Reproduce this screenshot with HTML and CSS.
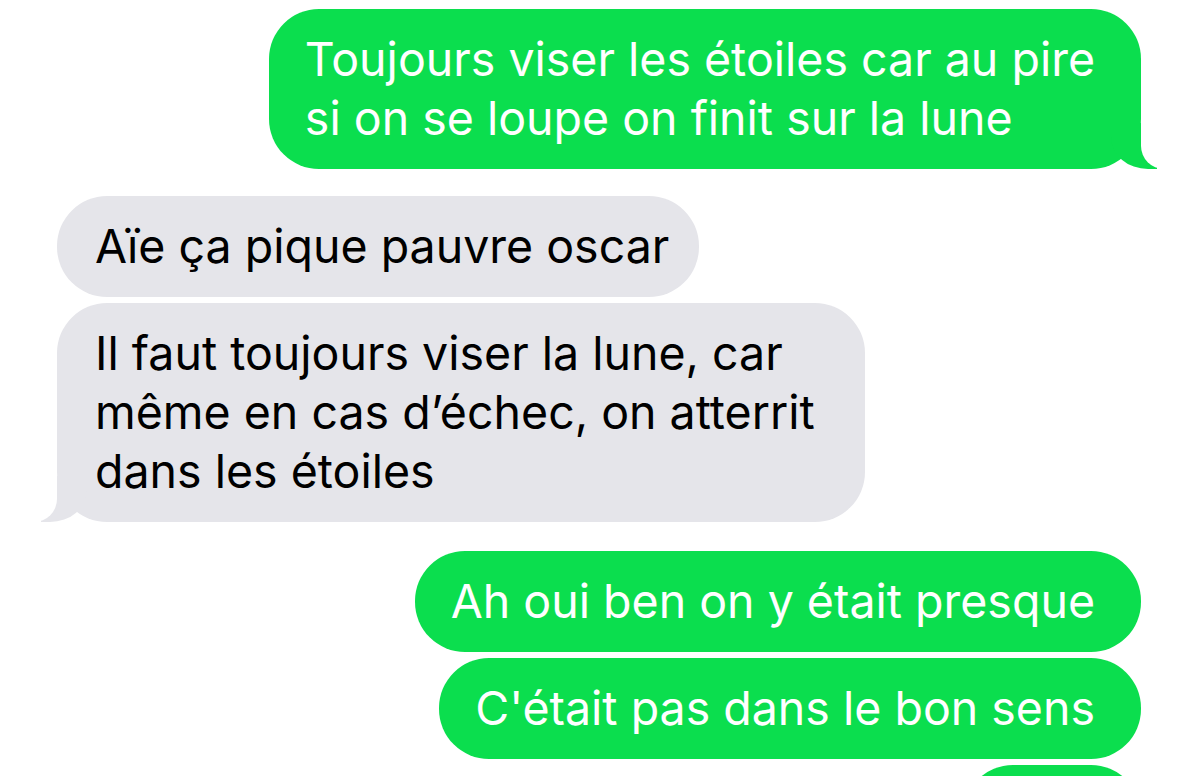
FILE: index.html
```html
<!DOCTYPE html>
<html lang="fr">
<head>
<meta charset="utf-8">
<title>Messages</title>
<link rel="stylesheet" href="styles.css">
</head>
<body>
<main class="thread">
  <div class="msg sent tail">Toujours viser les étoiles car au pire<br>si on se loupe on finit sur la lune</div>
  <div class="msg received gap-lg">Aïe ça pique pauvre oscar</div>
  <div class="msg received wrapped tail gap-sm">Il faut toujours viser la lune, car<br>même en cas d’échec, on atterrit<br>dans les étoiles</div>
  <div class="msg sent gap-xl">Ah oui ben on y était presque</div>
  <div class="msg sent gap-sm">C'était pas dans le bon sens</div>
  <div class="msg sent stub gap-sm"></div>
</main>
</body>
</html>
```

FILE: styles.css
```css
html, body {
  margin: 0;
  padding: 0;
  background: #ffffff;
}

body {
  width: 1200px;
  height: 776px;
  overflow: hidden;
  font-family: "Inter", "Roboto", "Liberation Sans", sans-serif;
}

.thread {
  display: flex;
  flex-direction: column;
  padding: 9px 59px 0 57px;
}

.msg {
  position: relative;
  font-size: 46.5px;
  line-height: 59px;
  border-radius: 50px;
  padding: 21px 36px;
  white-space: nowrap;
}

.sent {
  align-self: flex-end;
  background: #0bde4e;
  color: #ffffff;
  padding-right: 46px;
}

.received {
  align-self: flex-start;
  background: #e5e5ea;
  color: #000000;
  padding-left: 38px;
  padding-right: 30px;
}

.received.wrapped {
  padding-right: 50px;
}

.stub {
  width: 96px;
  height: 59px;
}

.gap-lg { margin-top: 27px; }
.gap-xl { margin-top: 29px; }
.gap-sm { margin-top: 6px; }

/* bubble tails */
.tail::before,
.tail::after {
  content: "";
  position: absolute;
  bottom: 0;
  height: 46px;
}

.sent.tail::before {
  right: -16px;
  width: 46px;
  background: #0bde4e;
  border-bottom-left-radius: 37px 32px;
}

.sent.tail::after {
  right: -60px;
  width: 60px;
  background: #ffffff;
  border-bottom-left-radius: 23px;
}

.received.tail::before {
  left: -16px;
  width: 46px;
  background: #e5e5ea;
  border-bottom-right-radius: 37px 32px;
}

.received.tail::after {
  left: -60px;
  width: 60px;
  background: #ffffff;
  border-bottom-right-radius: 23px;
}
```
